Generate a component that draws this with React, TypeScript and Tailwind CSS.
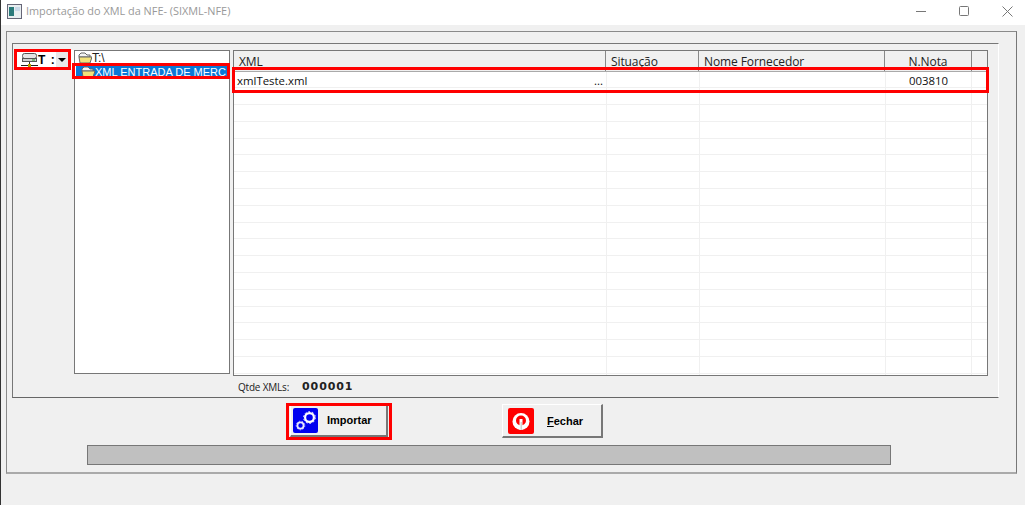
import React from "react";

const rowCount = 18;

const FolderIcon = () => {
  return (
    <svg width="14" height="12" viewBox="0 0 14 12" className="shrink-0">
      <path d="M1 3 L3 1 H7 L9 3 H12 V5 H1 Z" fill="#f4f4f4" stroke="#666" strokeWidth="1" />
      <path d="M1 5 H14 L12 11 H2 Z" fill="#f2e27a" stroke="#666" strokeWidth="1" />
    </svg>
  );
};

const DriveIcon = () => {
  return (
    <svg width="17" height="16" viewBox="0 0 17 16" className="shrink-0">
      <rect x="1.5" y="1.5" width="14" height="5" rx="2" fill="#e4e4e4" stroke="#555" />
      <rect x="1.5" y="6.5" width="14" height="3" fill="#cfcfcf" stroke="#555" />
      <rect x="11" y="7.5" width="3" height="1" fill="#22a022" />
      <path d="M8.5 10 V12" stroke="#333" />
      <path d="M0 13.5 H17" stroke="#222" />
      <rect x="7" y="12" width="3" height="3" fill="#b8a000" />
    </svg>
  );
};

const GearsIcon = () => {
  return (
    <svg width="25" height="25" viewBox="0 0 25 25" className="shrink-0">
      <rect width="25" height="25" rx="2" fill="#0000f0" />
      <circle cx="16.5" cy="9.5" r="4.4" fill="none" stroke="#fff" strokeWidth="2.2" />
      <circle cx="16.5" cy="9.5" r="5.9" fill="none" stroke="#fff" strokeWidth="1" strokeDasharray="1.8 1.9" />
      <circle cx="7.5" cy="17.5" r="3.1" fill="none" stroke="#e8e8ff" strokeWidth="1.8" />
      <circle cx="7.5" cy="17.5" r="4.3" fill="none" stroke="#e8e8ff" strokeWidth="0.8" strokeDasharray="1.4 1.6" />
    </svg>
  );
};

const PowerIcon = () => {
  return (
    <svg width="26" height="26" viewBox="0 0 26 26" className="shrink-0">
      <rect width="26" height="26" rx="2" fill="#ff0000" />
      <circle cx="13" cy="13.5" r="8.5" fill="#fff" />
      <circle cx="13" cy="12.5" r="5" fill="#ff0000" />
      <rect x="11.5" y="11" width="3" height="11" fill="#fff" />
      <rect x="12.6" y="14" width="1.2" height="8" fill="#c8c8c8" />
    </svg>
  );
};

const GridRow = ({ name, dots, nota }: { name?: string; dots?: boolean; nota?: string }) => {
  return (
    <div className="flex h-[16.8px] border-b border-[#f0f0f0] text-[11.4px] leading-[17px] text-[#111]">
      <div className="w-[373px] border-r border-[#f0f0f0] pl-[3px] flex justify-between pr-[3px]">
        <span>{name}</span>
        {dots && <span>...</span>}
      </div>
      <div className="w-[93px] border-r border-[#f0f0f0]"></div>
      <div className="w-[186px] border-r border-[#f0f0f0]"></div>
      <div className="w-[86px] border-r border-[#f0f0f0] text-center">{nota}</div>
      <div className="flex-1"></div>
    </div>
  );
};

export default function App() {
  return (
    <div
      className="relative w-[1025px] h-[505px] overflow-hidden bg-[#f0f0f0] border-l border-[#333]"
      style={{ fontFamily: '"Open Sans", "Liberation Sans", sans-serif' }}
    >
      {/* title bar */}
      <div className="flex items-center h-[25px] bg-white pl-[6px] pb-[2px]">
        <svg width="15" height="15" viewBox="0 0 15 15" className="shrink-0">
          <rect x="0.5" y="0.5" width="14" height="14" fill="#e8eef0" stroke="#667" />
          <rect x="2" y="3" width="5" height="9" fill="#2a7a7a" />
          <rect x="8" y="3" width="5" height="4" fill="#c8d8e8" />
        </svg>
        <span className="ml-[4px] text-[10.9px] text-[#999]">Importação do XML da NFE- (SIXML-NFE)</span>
        <div className="ml-auto flex items-center gap-[33px] pr-[12px] pb-[1px]">
          <svg width="10" height="10" viewBox="0 0 10 10"><path d="M0 5.5 H10" stroke="#777" /></svg>
          <svg width="10" height="10" viewBox="0 0 10 10"><rect x="0.5" y="0.5" width="9" height="9" rx="1" fill="none" stroke="#777" /></svg>
          <svg width="11" height="11" viewBox="0 0 11 11"><path d="M0.5 0.5 L10.5 10.5 M10.5 0.5 L0.5 10.5" stroke="#777" /></svg>
        </div>
      </div>

      <div className="pl-[5px] pt-[6px] w-[1016px]">
        {/* outer frame */}
        <div className="h-[443px] border-t border-l border-[#8a8a8a] border-r border-r-[#777] border-b-2 border-b-[#aaa] pl-[5px] pt-[11px]">
          {/* inner frame */}
          <div className="flex w-[987px] h-[355px] border-t border-l border-[#777] border-r border-r-white border-b border-b-[#666] pl-[1px] pt-[6px]">
            {/* drive combo */}
            <div className="w-[60px] h-[19px] shrink-0 flex items-center bg-white pl-[7px] pr-[6px]">
              <DriveIcon />
              <span className="text-[12px] font-bold tracking-[1px] text-black whitespace-pre" style={{ fontFamily: '"Liberation Sans", sans-serif' }}>T :</span>
              <div className="ml-auto flex items-center justify-center w-[12px] h-[17px] bg-[#e8e8e8]">
                <div className="w-0 h-0 border-x-[4px] border-x-transparent border-t-[4px] border-t-black"></div>
              </div>
            </div>

            {/* folder tree */}
            <div className="w-[156px] h-[324px] shrink-0 bg-white border border-[#777] overflow-hidden text-[11px] leading-[14px]" style={{ fontFamily: '"Liberation Sans", sans-serif' }}>
              <div className="flex items-center h-[14px] pl-[3px] text-[#222]">
                <FolderIcon />
                <span className="text-[12px]">T:\</span>
              </div>
              <div className="flex items-center h-[14px] ml-[1px] pl-[5px] bg-[#0a78d7] text-white whitespace-nowrap overflow-hidden">
                <FolderIcon />
                <span>XML ENTRADA DE MERC</span>
              </div>
            </div>

            {/* xml grid */}
            <div className="ml-[3px] w-[755px] h-[326px] shrink-0 bg-white border border-[#777] overflow-hidden">
              <div className="flex h-[20.5px] bg-[#f0f0f0] border-b border-[#aaa] text-[12px] leading-[22px] tracking-[-0.1px] text-[#222]">
                <div className="w-[372px] border-r border-[#888] pl-[5px]">XML</div>
                <div className="w-[93px] border-r border-[#888] pl-[5px]">Situação</div>
                <div className="w-[186px] border-r border-[#888] pl-[5px]">Nome Fornecedor</div>
                <div className="w-[87px] border-r border-[#888] text-center">N.Nota</div>
                <div className="flex-1"></div>
              </div>
              <GridRow name="xmlTeste.xml" dots nota="003810" />
              {Array.from({ length: rowCount }).map((_, i) => (
                <GridRow key={i} />
              ))}
            </div>
          </div>

          {/* counter, drawn in the strip under the grid */}
          <div className="flex items-center h-[0px] -translate-y-[11px] pl-[226px] text-[#222]">
            <span className="text-[10px] tracking-[-0.2px]">Qtde XMLs:</span>
            <span className="ml-[13px] text-[11px] font-bold tracking-[0.9px]" style={{ fontFamily: '"DejaVu Sans", sans-serif' }}>000001</span>
          </div>

          {/* buttons */}
          <div className="flex items-start mt-[6px] pl-[278px]">
            <button className="flex items-center mt-[1px] w-[98px] h-[32px] bg-[#f0f0f0] border border-white border-r-2 border-r-[#777] border-b-2 border-b-[#777] pl-[2px]">
              <GearsIcon />
              <span className="ml-[9px] text-[11px] font-bold text-black" style={{ fontFamily: '"Liberation Sans", sans-serif' }}>Importar</span>
            </button>
            <button className="flex items-center ml-[114px] w-[101px] h-[34px] bg-[#f0f0f0] border border-white border-r-2 border-r-[#777] border-b-2 border-b-[#777] pl-[5px]">
              <PowerIcon />
              <span className="ml-[13px] mt-[1px] text-[11px] font-bold text-black" style={{ fontFamily: '"Liberation Sans", sans-serif' }}><u>F</u>echar</span>
            </button>
          </div>

          {/* progress bar */}
          <div className="ml-[75px] mt-[7px] w-[804px] h-[20px] bg-[#c0c0c0] border border-[#777]"></div>
        </div>
      </div>

      {/* red annotation boxes */}
      <div className="absolute left-[13px] top-[49px] w-[57px] h-[21px] border-[3px] border-[#f00]"></div>
      <div className="absolute left-[71px] top-[63px] w-[158px] h-[16px] border-[3px] border-[#f00]"></div>
      <div className="absolute left-[231px] top-[67px] w-[757px] h-[26px] border-[3px] border-[#f00]"></div>
      <div className="absolute left-[285px] top-[403px] w-[106px] h-[37px] border-[3px] border-[#f00]"></div>
    </div>
  );
}
